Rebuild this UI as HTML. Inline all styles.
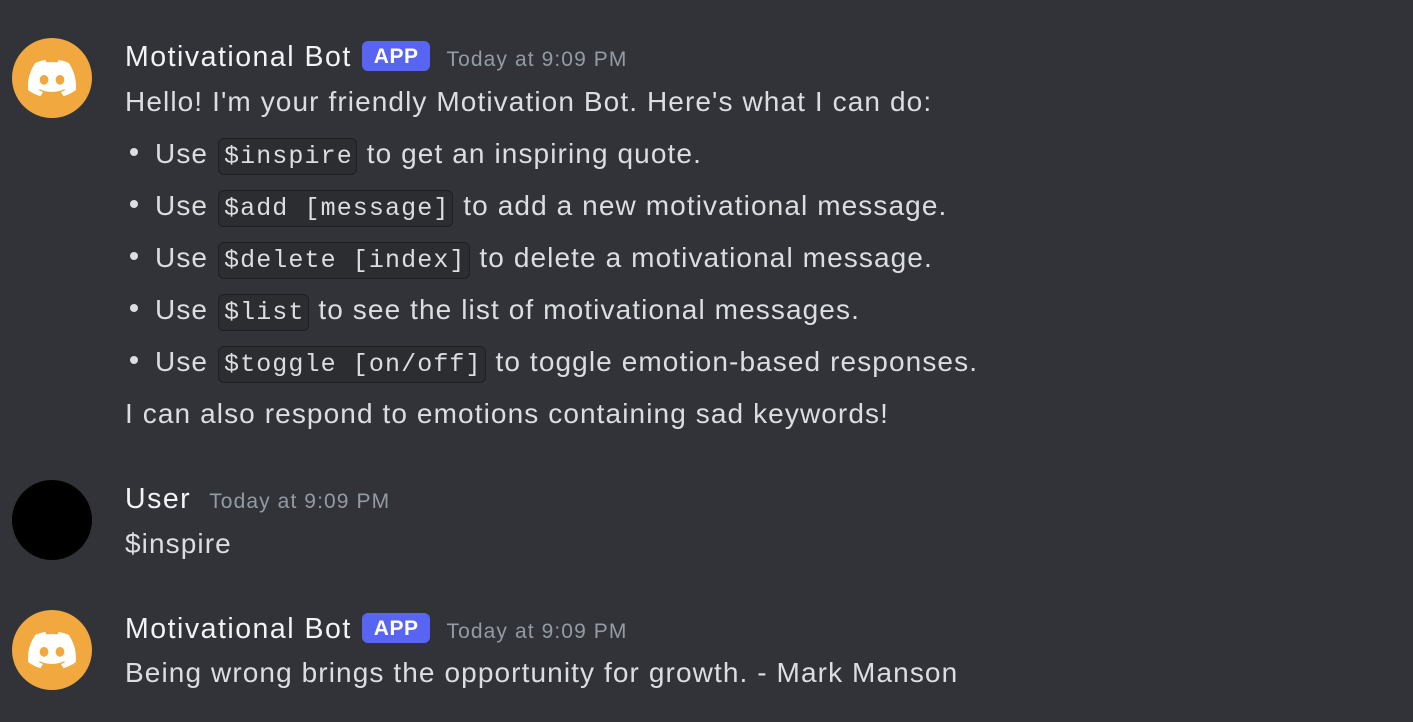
<!DOCTYPE html>
<html><head><meta charset="utf-8"><style>
html,body{margin:0;padding:0;background:#313338;width:1413px;height:722px;overflow:hidden}
body{font-family:"Liberation Sans",sans-serif;color:#dbdee1;position:relative}
.av{position:absolute;left:12px;width:80px;height:80px;border-radius:50%}
.bot{background:#f0a83f}
.av svg{position:absolute;left:16px;top:20px}
.l{position:absolute;left:125px;font-size:28px;white-space:nowrap;line-height:34px;letter-spacing:1.1px}
.name{color:#f2f3f5;font-size:28.5px;letter-spacing:1.5px}
.app{display:inline-block;background:#5865f2;color:#fff;font-size:21px;font-weight:bold;border-radius:6px;padding:0 12px;height:30px;line-height:31px;vertical-align:3px;margin-left:10px;letter-spacing:0.5px}
.ts{font-size:21px;color:#949ba4;margin-left:16px;letter-spacing:1.1px}
.b{display:inline-block;width:8px;height:8px;border-radius:50%;background:#dbdee1;margin:0 17px 7px 5px}
code{font-family:"Liberation Mono",monospace;font-size:25px;letter-spacing:1.1px;background:#2b2d31;border:1.5px solid #1e1f22;border-radius:6px;padding:3px 3px 3px 5px;margin:0 1px}
</style></head><body>
<div class="av bot" style="top:38px"><svg width="48" height="40" viewBox="0 0 127 96"><path fill="#fff" d="M107.7 8.1A105 105 0 0 0 81.5 0a72 72 0 0 0-3.4 6.8 97.7 97.7 0 0 0-29.1 0A72 72 0 0 0 45.7 0a105.9 105.9 0 0 0-26.3 8.1C2.8 32.7-1.7 56.6.5 80.2a105.7 105.7 0 0 0 32.2 16.1 77.7 77.7 0 0 0 6.9-11.1 68.4 68.4 0 0 1-10.9-5.2c.9-.7 1.8-1.4 2.6-2.1a75.6 75.6 0 0 0 64.3 0c.9.7 1.7 1.4 2.6 2.1a68.7 68.7 0 0 1-10.9 5.2 77 77 0 0 0 6.9 11.1 105.3 105.3 0 0 0 32.2-16.1c2.6-27.3-4.5-51-18.7-72.1ZM42.5 65.7c-6.3 0-11.4-5.7-11.4-12.7s5-12.8 11.4-12.8S54 46 53.9 53s-5 12.7-11.4 12.7Zm42.2 0c-6.3 0-11.4-5.7-11.4-12.7s5-12.8 11.4-12.8S96.2 46 96.1 53s-5 12.7-11.4 12.7Z"/></svg></div>
<div class="l" style="top:40px"><span class="name">Motivational Bot</span><span class="app">APP</span><span class="ts">Today at 9:09 PM</span></div>
<div class="l" style="top:85px">Hello! I'm your friendly Motivation Bot. Here's what I can do:</div>
<div class="l" style="top:137px"><span class="b"></span>Use <code>$inspire</code> to get an inspiring quote.</div>
<div class="l" style="top:189px"><span class="b"></span>Use <code>$add [message]</code> to add a new motivational message.</div>
<div class="l" style="top:241px"><span class="b"></span>Use <code>$delete [index]</code> to delete a motivational message.</div>
<div class="l" style="top:293px"><span class="b"></span>Use <code>$list</code> to see the list of motivational messages.</div>
<div class="l" style="top:345px"><span class="b"></span>Use <code>$toggle [on/off]</code> to toggle emotion-based responses.</div>
<div class="l" style="top:397px">I can also respond to emotions containing sad keywords!</div>

<div class="av" style="top:480px;background:#000"></div>
<div class="l" style="top:482px"><span class="name">User</span><span class="ts" style="margin-left:18px">Today at 9:09 PM</span></div>
<div class="l" style="top:527px">$inspire</div>

<div class="av bot" style="top:610px"><svg width="48" height="40" viewBox="0 0 127 96"><path fill="#fff" d="M107.7 8.1A105 105 0 0 0 81.5 0a72 72 0 0 0-3.4 6.8 97.7 97.7 0 0 0-29.1 0A72 72 0 0 0 45.7 0a105.9 105.9 0 0 0-26.3 8.1C2.8 32.7-1.7 56.6.5 80.2a105.7 105.7 0 0 0 32.2 16.1 77.7 77.7 0 0 0 6.9-11.1 68.4 68.4 0 0 1-10.9-5.2c.9-.7 1.8-1.4 2.6-2.1a75.6 75.6 0 0 0 64.3 0c.9.7 1.7 1.4 2.6 2.1a68.7 68.7 0 0 1-10.9 5.2 77 77 0 0 0 6.9 11.1 105.3 105.3 0 0 0 32.2-16.1c2.6-27.3-4.5-51-18.7-72.1ZM42.5 65.7c-6.3 0-11.4-5.7-11.4-12.7s5-12.8 11.4-12.8S54 46 53.9 53s-5 12.7-11.4 12.7Zm42.2 0c-6.3 0-11.4-5.7-11.4-12.7s5-12.8 11.4-12.8S96.2 46 96.1 53s-5 12.7-11.4 12.7Z"/></svg></div>
<div class="l" style="top:612px"><span class="name">Motivational Bot</span><span class="app">APP</span><span class="ts">Today at 9:09 PM</span></div>
<div class="l" style="top:656px">Being wrong brings the opportunity for growth. - Mark Manson</div>
</body></html>
